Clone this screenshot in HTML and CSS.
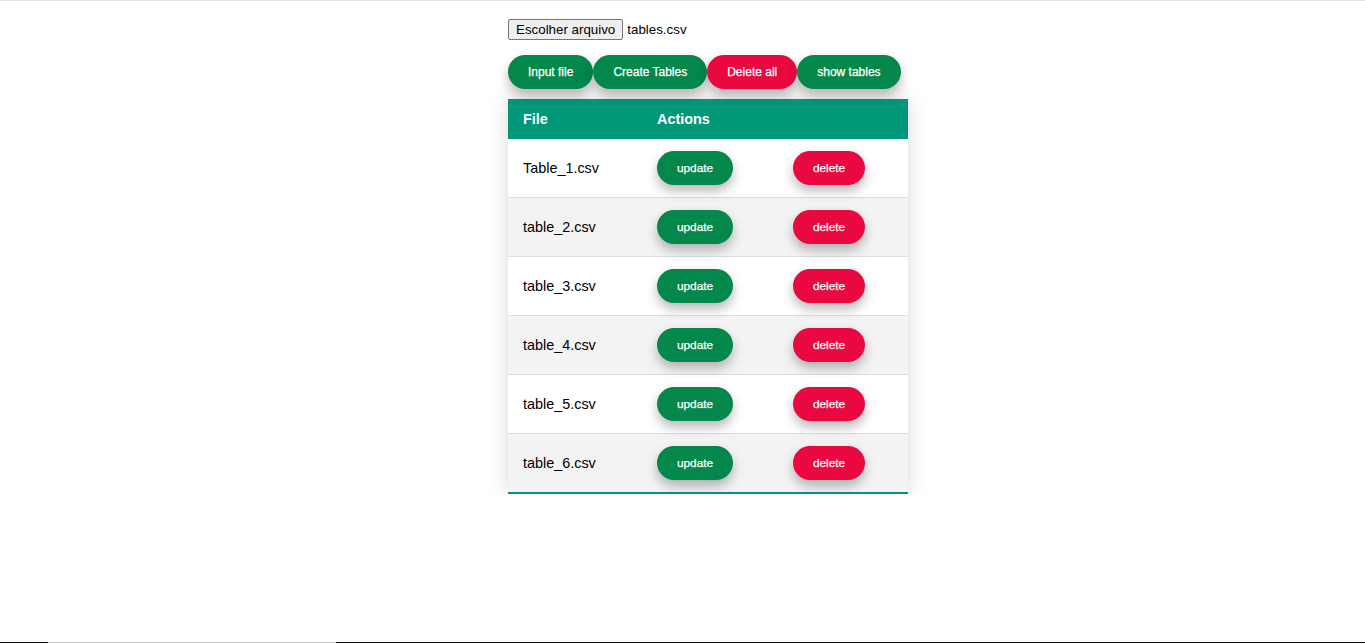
FILE: index.html
```html
<!DOCTYPE html>
<html lang="pt">
<head>
<meta charset="utf-8">
<title>Tables</title>
<link rel="stylesheet" href="styles.css">
</head>
<body>
<div class="topline"></div>
<main class="wrap">
  <div class="file-row">
    <span class="file-btn">Escolher arquivo</span>
    <span class="file-name">tables.csv</span>
  </div>
  <div class="toolbar">
    <button class="pill green">Input file</button>
    <button class="pill green">Create Tables</button>
    <button class="pill red">Delete all</button>
    <button class="pill green">show tables</button>
  </div>
  <table class="styled-table">
    <colgroup><col class="c1"><col class="c2"><col class="c3"></colgroup>
    <thead>
      <tr><th>File</th><th>Actions</th><th></th></tr>
    </thead>
    <tbody>
      <tr><td>Table_1.csv</td><td><button class="pill sm green">update</button></td><td><button class="pill sm red">delete</button></td></tr>
      <tr><td>table_2.csv</td><td><button class="pill sm green">update</button></td><td><button class="pill sm red">delete</button></td></tr>
      <tr><td>table_3.csv</td><td><button class="pill sm green">update</button></td><td><button class="pill sm red">delete</button></td></tr>
      <tr><td>table_4.csv</td><td><button class="pill sm green">update</button></td><td><button class="pill sm red">delete</button></td></tr>
      <tr><td>table_5.csv</td><td><button class="pill sm green">update</button></td><td><button class="pill sm red">delete</button></td></tr>
      <tr><td>table_6.csv</td><td><button class="pill sm green">update</button></td><td><button class="pill sm red">delete</button></td></tr>
    </tbody>
  </table>
</main>
<div class="bottombar"><span class="seg-dark a"></span><span class="seg-gray"></span><span class="seg-dark b"></span></div>
</body>
</html>
```
FILE: styles.css
```css
html, body {
  margin: 0;
  padding: 0;
  background: #fff;
  font-family: "Liberation Sans", Arial, sans-serif;
}
.topline {
  height: 1px;
  background: #e2e2e2;
}
.wrap {
  width: 400px;
  margin: 0 0 0 508px;
  padding-top: 18px;
}
.file-row {
  display: flex;
  align-items: center;
  gap: 4px;
  font-size: 13.33px;
  color: #000;
  height: 21px;
}
.file-btn {
  display: inline-flex;
  align-items: center;
  height: 19px;
  padding: 0 7px;
  background: #efefef;
  border: 1px solid #767676;
  border-radius: 2px;
  color: #000;
}
.toolbar {
  display: flex;
  margin-top: 15px;
  height: 34px;
}
.pill {
  height: 34px;
  padding: 0 20px 1px;
  border: none;
  border-radius: 17px;
  color: #fff;
  font-family: "Liberation Sans", Arial, sans-serif;
  font-size: 12px;
  -webkit-text-stroke: 0.25px #fff;
  box-shadow: 0 6px 12px rgba(0, 0, 0, 0.28);
  cursor: pointer;
}
.pill.green { background: #03874b; }
.pill.red { background: #ea0841; }
.pill.sm { font-size: 11.8px; }

.styled-table {
  margin-top: 10px;
  border-collapse: collapse;
  width: 400px;
  font-size: 14.4px;
  box-shadow: 0 0 20px rgba(0, 0, 0, 0.15);
  table-layout: fixed;
}
.c1 { width: 134px; }
.c2 { width: 136px; }
.c3 { width: 130px; }
.styled-table thead tr {
  background: #009879;
  color: #fff;
  text-align: left;
}
.styled-table th {
  height: 40px;
  padding: 0 15px;
  box-sizing: border-box;
  font-weight: bold;
}
.styled-table td {
  padding: 12px 15px;
  height: 34px;
  color: #000;
}
.styled-table tbody tr {
  border-bottom: 1px solid #dddddd;
}
.styled-table tbody tr:nth-of-type(even) {
  background: #f3f3f3;
}
.styled-table tbody tr:last-of-type {
  border-bottom: 2px solid #009879;
}
.bottombar {
  position: fixed;
  left: 0;
  right: 0;
  bottom: 0;
  height: 1px;
  display: flex;
  background: #111;
}
.seg-dark.a { width: 48px; }
.seg-gray { width: 288px; background: #c4c4c4; }
```
